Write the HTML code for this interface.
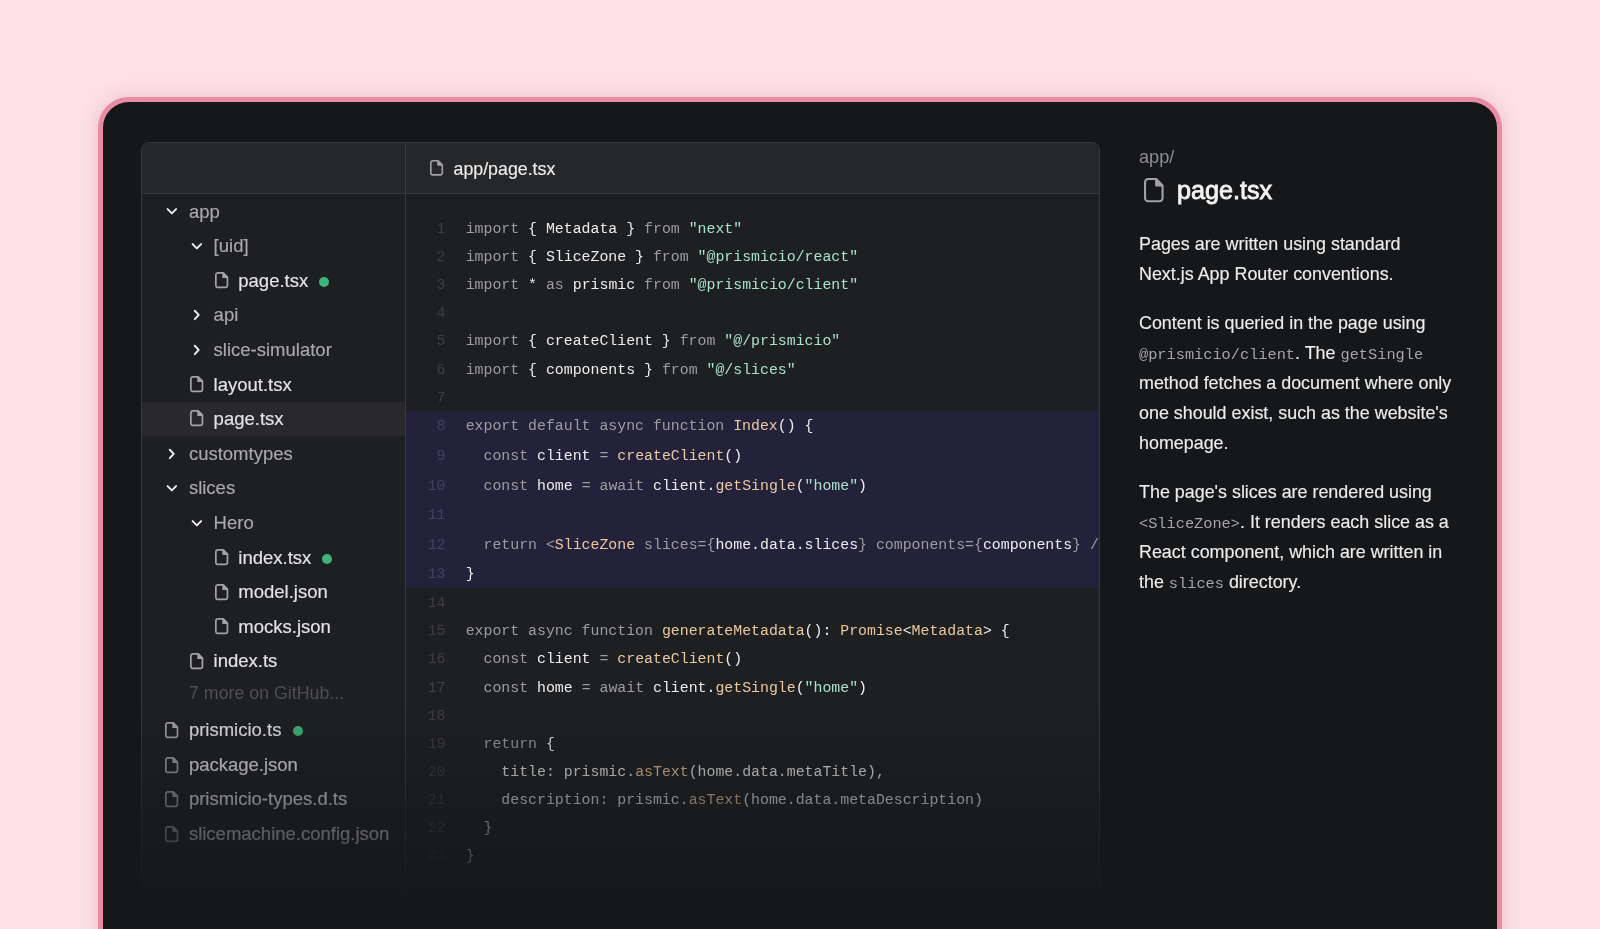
<!DOCTYPE html>
<html><head><meta charset="utf-8"><title>page.tsx</title>
<style>
*{box-sizing:border-box;margin:0;padding:0}
.root{position:absolute;left:0;top:0;width:1600px;height:929px;overflow:hidden;will-change:transform}
html,body{width:1600px;height:929px;overflow:hidden;background:#fde1e5;font-family:"Liberation Sans",sans-serif}
.frame{position:absolute;left:98px;top:97px;width:1404px;height:1000px;border:5px solid #e88ca2;border-radius:31px;background:#161719;box-shadow:0 0 18px rgba(190,100,125,0.28)}
.panel{position:absolute;left:141px;top:142px;width:959px;height:754px;border:1px solid #39393c;border-radius:8px;background:#1e1f21;overflow:hidden}
.hdr{position:absolute;left:0;top:0;width:100%;height:51px;background:#262729;border-bottom:1px solid #39393c}
.vsep{position:absolute;left:263px;top:0;width:1px;height:100%;background:#39393c}
.row{position:absolute;left:0;width:263px;height:34.6px}
.row.sel{background:#29292c;margin-top:-0.6px}
.row .ic{position:absolute}
.row .tx{position:absolute;font-size:18.5px;-webkit-text-stroke:0.15px currentColor;white-space:pre;line-height:34.6px;top:0}
.folder .tx{color:#a9a9ab}
.file .tx{color:#e4e4e6}
.dot{position:absolute;width:10px;height:10px;border-radius:50%;background:#3fb37a}
.code{position:absolute;font-family:"Liberation Mono",monospace;font-size:14.87px;white-space:pre}
.ln{position:absolute;left:0;width:305px;}
.ln .n{position:absolute;right:0;width:40px;text-align:right;}
.kw{color:#9d9d9f}.id{color:#ededed}.str{color:#a6e3cb}.fn{color:#eac9a0}
.fade{position:absolute;left:140px;width:962px;top:705px;height:193px;background:linear-gradient(to bottom,rgba(22,23,25,0) 0%,rgba(22,23,25,0.55) 55%,rgba(22,23,25,0.97) 100%)}
.right{position:absolute;left:1139px;top:0;width:330px;color:#ececec}
.rl{position:absolute;left:0;white-space:pre;font-size:17.9px;line-height:30px;-webkit-text-stroke:0.15px currentColor}
.right code{font-family:"Liberation Mono",monospace;font-size:15.3px;color:#a5a5a7;-webkit-text-stroke:0}
</style></head><body><div class="root">
<div class="frame"></div>

<div class="panel">
<div class="hdr"></div>
<div style="position:absolute;left:287.90px;top:17.10px"><svg width="14.1" height="16.7" viewBox="0 0 14.1 16.7" style="display:block;overflow:visible"><path d="M2.87 0.80 H8.16 L12.30 4.82 V12.83 A2.07 2.07 0 0 1 10.23 14.90 H2.87 A2.07 2.07 0 0 1 0.80 12.83 V2.87 A2.07 2.07 0 0 1 2.87 0.80 Z" fill="none" stroke="#a3a3a5" stroke-width="1.6" stroke-linejoin="round"/><path d="M7.76 0.80 V5.22 H12.30 Z" fill="#a3a3a5" stroke="#a3a3a5" stroke-width="0.96" stroke-linejoin="round"/></svg></div>
<div style="position:absolute;left:311.5px;top:12px;font-size:17.8px;line-height:28px;color:#ececec;white-space:pre;-webkit-text-stroke:0.15px currentColor">app/page.tsx</div>
<div class="row folder" style="top:51.60px"><div class="ic" style="left:23.00px;top:10.60px"><svg width="14" height="14" viewBox="0 0 14 14" style="display:block"><path d="M2.6 4.1 L6.85 8.4 L11.1 4.1" fill="none" stroke="#ececec" stroke-width="2" stroke-linecap="round" stroke-linejoin="round"/></svg></div><div class="tx" style="left:46.9px">app</div></div>
<div class="row folder" style="top:86.20px"><div class="ic" style="left:47.70px;top:10.60px"><svg width="14" height="14" viewBox="0 0 14 14" style="display:block"><path d="M2.6 4.1 L6.85 8.4 L11.1 4.1" fill="none" stroke="#ececec" stroke-width="2" stroke-linecap="round" stroke-linejoin="round"/></svg></div><div class="tx" style="left:71.6px">[uid]</div></div>
<div class="row file" style="top:120.80px"><div class="ic" style="left:72.55px;top:8.40px"><svg width="14.3" height="17.3" viewBox="0 0 14.3 17.3" style="display:block;overflow:visible"><path d="M2.95 0.85 H8.27 L12.45 5.01 V13.35 A2.10 2.10 0 0 1 10.35 15.45 H2.95 A2.10 2.10 0 0 1 0.85 13.35 V2.95 A2.10 2.10 0 0 1 2.95 0.85 Z" fill="none" stroke="#a3a3a5" stroke-width="1.7" stroke-linejoin="round"/><path d="M7.87 0.85 V5.41 H12.45 Z" fill="#a3a3a5" stroke="#a3a3a5" stroke-width="1.02" stroke-linejoin="round"/></svg></div><div class="tx" style="left:96.3px">page.tsx</div><span class="dot" style="left:176.9px;top:13.1px"></span></div>
<div class="row folder" style="top:155.40px"><div class="ic" style="left:47.70px;top:10.10px"><svg width="14" height="14" viewBox="0 0 14 14" style="display:block"><path d="M4.8 2.8 L8.7 6.9 L4.8 11.1" fill="none" stroke="#ececec" stroke-width="2" stroke-linecap="round" stroke-linejoin="round"/></svg></div><div class="tx" style="left:71.6px">api</div></div>
<div class="row folder" style="top:190.00px"><div class="ic" style="left:47.70px;top:10.10px"><svg width="14" height="14" viewBox="0 0 14 14" style="display:block"><path d="M4.8 2.8 L8.7 6.9 L4.8 11.1" fill="none" stroke="#ececec" stroke-width="2" stroke-linecap="round" stroke-linejoin="round"/></svg></div><div class="tx" style="left:71.6px">slice-simulator</div></div>
<div class="row file" style="top:224.60px"><div class="ic" style="left:47.85px;top:8.40px"><svg width="14.3" height="17.3" viewBox="0 0 14.3 17.3" style="display:block;overflow:visible"><path d="M2.95 0.85 H8.27 L12.45 5.01 V13.35 A2.10 2.10 0 0 1 10.35 15.45 H2.95 A2.10 2.10 0 0 1 0.85 13.35 V2.95 A2.10 2.10 0 0 1 2.95 0.85 Z" fill="none" stroke="#a3a3a5" stroke-width="1.7" stroke-linejoin="round"/><path d="M7.87 0.85 V5.41 H12.45 Z" fill="#a3a3a5" stroke="#a3a3a5" stroke-width="1.02" stroke-linejoin="round"/></svg></div><div class="tx" style="left:71.6px">layout.tsx</div></div>
<div class="row file sel" style="top:259.20px"><div class="ic" style="left:47.85px;top:8.40px"><svg width="14.3" height="17.3" viewBox="0 0 14.3 17.3" style="display:block;overflow:visible"><path d="M2.95 0.85 H8.27 L12.45 5.01 V13.35 A2.10 2.10 0 0 1 10.35 15.45 H2.95 A2.10 2.10 0 0 1 0.85 13.35 V2.95 A2.10 2.10 0 0 1 2.95 0.85 Z" fill="none" stroke="#a3a3a5" stroke-width="1.7" stroke-linejoin="round"/><path d="M7.87 0.85 V5.41 H12.45 Z" fill="#a3a3a5" stroke="#a3a3a5" stroke-width="1.02" stroke-linejoin="round"/></svg></div><div class="tx" style="left:71.6px">page.tsx</div></div>
<div class="row folder" style="top:293.80px"><div class="ic" style="left:23.00px;top:10.10px"><svg width="14" height="14" viewBox="0 0 14 14" style="display:block"><path d="M4.8 2.8 L8.7 6.9 L4.8 11.1" fill="none" stroke="#ececec" stroke-width="2" stroke-linecap="round" stroke-linejoin="round"/></svg></div><div class="tx" style="left:46.9px">customtypes</div></div>
<div class="row folder" style="top:328.40px"><div class="ic" style="left:23.00px;top:10.60px"><svg width="14" height="14" viewBox="0 0 14 14" style="display:block"><path d="M2.6 4.1 L6.85 8.4 L11.1 4.1" fill="none" stroke="#ececec" stroke-width="2" stroke-linecap="round" stroke-linejoin="round"/></svg></div><div class="tx" style="left:46.9px">slices</div></div>
<div class="row folder" style="top:363.00px"><div class="ic" style="left:47.70px;top:10.60px"><svg width="14" height="14" viewBox="0 0 14 14" style="display:block"><path d="M2.6 4.1 L6.85 8.4 L11.1 4.1" fill="none" stroke="#ececec" stroke-width="2" stroke-linecap="round" stroke-linejoin="round"/></svg></div><div class="tx" style="left:71.6px">Hero</div></div>
<div class="row file" style="top:397.60px"><div class="ic" style="left:72.55px;top:8.40px"><svg width="14.3" height="17.3" viewBox="0 0 14.3 17.3" style="display:block;overflow:visible"><path d="M2.95 0.85 H8.27 L12.45 5.01 V13.35 A2.10 2.10 0 0 1 10.35 15.45 H2.95 A2.10 2.10 0 0 1 0.85 13.35 V2.95 A2.10 2.10 0 0 1 2.95 0.85 Z" fill="none" stroke="#a3a3a5" stroke-width="1.7" stroke-linejoin="round"/><path d="M7.87 0.85 V5.41 H12.45 Z" fill="#a3a3a5" stroke="#a3a3a5" stroke-width="1.02" stroke-linejoin="round"/></svg></div><div class="tx" style="left:96.3px">index.tsx</div><span class="dot" style="left:179.5px;top:13.1px"></span></div>
<div class="row file" style="top:432.20px"><div class="ic" style="left:72.55px;top:8.40px"><svg width="14.3" height="17.3" viewBox="0 0 14.3 17.3" style="display:block;overflow:visible"><path d="M2.95 0.85 H8.27 L12.45 5.01 V13.35 A2.10 2.10 0 0 1 10.35 15.45 H2.95 A2.10 2.10 0 0 1 0.85 13.35 V2.95 A2.10 2.10 0 0 1 2.95 0.85 Z" fill="none" stroke="#a3a3a5" stroke-width="1.7" stroke-linejoin="round"/><path d="M7.87 0.85 V5.41 H12.45 Z" fill="#a3a3a5" stroke="#a3a3a5" stroke-width="1.02" stroke-linejoin="round"/></svg></div><div class="tx" style="left:96.3px">model.json</div></div>
<div class="row file" style="top:466.80px"><div class="ic" style="left:72.55px;top:8.40px"><svg width="14.3" height="17.3" viewBox="0 0 14.3 17.3" style="display:block;overflow:visible"><path d="M2.95 0.85 H8.27 L12.45 5.01 V13.35 A2.10 2.10 0 0 1 10.35 15.45 H2.95 A2.10 2.10 0 0 1 0.85 13.35 V2.95 A2.10 2.10 0 0 1 2.95 0.85 Z" fill="none" stroke="#a3a3a5" stroke-width="1.7" stroke-linejoin="round"/><path d="M7.87 0.85 V5.41 H12.45 Z" fill="#a3a3a5" stroke="#a3a3a5" stroke-width="1.02" stroke-linejoin="round"/></svg></div><div class="tx" style="left:96.3px">mocks.json</div></div>
<div class="row file" style="top:501.40px"><div class="ic" style="left:47.85px;top:8.40px"><svg width="14.3" height="17.3" viewBox="0 0 14.3 17.3" style="display:block;overflow:visible"><path d="M2.95 0.85 H8.27 L12.45 5.01 V13.35 A2.10 2.10 0 0 1 10.35 15.45 H2.95 A2.10 2.10 0 0 1 0.85 13.35 V2.95 A2.10 2.10 0 0 1 2.95 0.85 Z" fill="none" stroke="#a3a3a5" stroke-width="1.7" stroke-linejoin="round"/><path d="M7.87 0.85 V5.41 H12.45 Z" fill="#a3a3a5" stroke="#a3a3a5" stroke-width="1.02" stroke-linejoin="round"/></svg></div><div class="tx" style="left:71.6px">index.ts</div></div>
<div style="position:absolute;left:47px;top:533.2px;font-size:17.8px;line-height:34.6px;color:#4f4f51;white-space:pre">7 more on GitHub...</div>
<div class="row file" style="top:570.20px"><div class="ic" style="left:23.15px;top:9.00px"><svg width="14.3" height="17.3" viewBox="0 0 14.3 17.3" style="display:block;overflow:visible"><path d="M2.95 0.85 H8.27 L12.45 5.01 V13.35 A2.10 2.10 0 0 1 10.35 15.45 H2.95 A2.10 2.10 0 0 1 0.85 13.35 V2.95 A2.10 2.10 0 0 1 2.95 0.85 Z" fill="none" stroke="#a3a3a5" stroke-width="1.7" stroke-linejoin="round"/><path d="M7.87 0.85 V5.41 H12.45 Z" fill="#a3a3a5" stroke="#a3a3a5" stroke-width="1.02" stroke-linejoin="round"/></svg></div><div class="tx" style="left:46.9px">prismicio.ts</div><span class="dot" style="left:150.8px;top:13.1px"></span></div>
<div class="row file" style="top:604.80px"><div class="ic" style="left:23.15px;top:9.00px"><svg width="14.3" height="17.3" viewBox="0 0 14.3 17.3" style="display:block;overflow:visible"><path d="M2.95 0.85 H8.27 L12.45 5.01 V13.35 A2.10 2.10 0 0 1 10.35 15.45 H2.95 A2.10 2.10 0 0 1 0.85 13.35 V2.95 A2.10 2.10 0 0 1 2.95 0.85 Z" fill="none" stroke="#a3a3a5" stroke-width="1.7" stroke-linejoin="round"/><path d="M7.87 0.85 V5.41 H12.45 Z" fill="#a3a3a5" stroke="#a3a3a5" stroke-width="1.02" stroke-linejoin="round"/></svg></div><div class="tx" style="left:46.9px">package.json</div></div>
<div class="row file" style="top:639.40px"><div class="ic" style="left:23.15px;top:9.00px"><svg width="14.3" height="17.3" viewBox="0 0 14.3 17.3" style="display:block;overflow:visible"><path d="M2.95 0.85 H8.27 L12.45 5.01 V13.35 A2.10 2.10 0 0 1 10.35 15.45 H2.95 A2.10 2.10 0 0 1 0.85 13.35 V2.95 A2.10 2.10 0 0 1 2.95 0.85 Z" fill="none" stroke="#a3a3a5" stroke-width="1.7" stroke-linejoin="round"/><path d="M7.87 0.85 V5.41 H12.45 Z" fill="#a3a3a5" stroke="#a3a3a5" stroke-width="1.02" stroke-linejoin="round"/></svg></div><div class="tx" style="left:46.9px">prismicio-types.d.ts</div></div>
<div class="row file" style="top:674.00px"><div class="ic" style="left:23.15px;top:9.00px"><svg width="14.3" height="17.3" viewBox="0 0 14.3 17.3" style="display:block;overflow:visible"><path d="M2.95 0.85 H8.27 L12.45 5.01 V13.35 A2.10 2.10 0 0 1 10.35 15.45 H2.95 A2.10 2.10 0 0 1 0.85 13.35 V2.95 A2.10 2.10 0 0 1 2.95 0.85 Z" fill="none" stroke="#a3a3a5" stroke-width="1.7" stroke-linejoin="round"/><path d="M7.87 0.85 V5.41 H12.45 Z" fill="#a3a3a5" stroke="#a3a3a5" stroke-width="1.02" stroke-linejoin="round"/></svg></div><div class="tx" style="left:46.9px">slicemachine.config.json</div></div>
<div class="vsep"></div>
<div style="position:absolute;left:264px;top:267.8px;width:700px;height:177.1px;background:#24223a"></div>
<div class="code" style="left:263.5px;top:72.00px;width:40px;text-align:right;line-height:28px;color:#3e3e40">1</div>
<div class="code" style="left:323.7px;top:72.00px;line-height:28px"><span class="kw">import </span><span class="id">{ Metadata } </span><span class="kw">from </span><span class="str">"next"</span></div>
<div class="code" style="left:263.5px;top:100.10px;width:40px;text-align:right;line-height:28px;color:#3e3e40">2</div>
<div class="code" style="left:323.7px;top:100.10px;line-height:28px"><span class="kw">import </span><span class="id">{ SliceZone } </span><span class="kw">from </span><span class="str">"@prismicio/react"</span></div>
<div class="code" style="left:263.5px;top:128.20px;width:40px;text-align:right;line-height:28px;color:#3e3e40">3</div>
<div class="code" style="left:323.7px;top:128.20px;line-height:28px"><span class="kw">import </span><span class="id">* </span><span class="kw">as </span><span class="id">prismic </span><span class="kw">from </span><span class="str">"@prismicio/client"</span></div>
<div class="code" style="left:263.5px;top:156.30px;width:40px;text-align:right;line-height:28px;color:#3e3e40">4</div>
<div class="code" style="left:323.7px;top:156.30px;line-height:28px"></div>
<div class="code" style="left:263.5px;top:184.40px;width:40px;text-align:right;line-height:28px;color:#3e3e40">5</div>
<div class="code" style="left:323.7px;top:184.40px;line-height:28px"><span class="kw">import </span><span class="id">{ createClient } </span><span class="kw">from </span><span class="str">"@/prismicio"</span></div>
<div class="code" style="left:263.5px;top:212.50px;width:40px;text-align:right;line-height:28px;color:#3e3e40">6</div>
<div class="code" style="left:323.7px;top:212.50px;line-height:28px"><span class="kw">import </span><span class="id">{ components } </span><span class="kw">from </span><span class="str">"@/slices"</span></div>
<div class="code" style="left:263.5px;top:240.60px;width:40px;text-align:right;line-height:28px;color:#3e3e40">7</div>
<div class="code" style="left:323.7px;top:240.60px;line-height:28px"></div>
<div class="code" style="left:263.5px;top:269.40px;width:40px;text-align:right;line-height:28px;color:#433f64">8</div>
<div class="code" style="left:323.7px;top:269.40px;line-height:28px"><span class="kw">export default async function </span><span class="fn">Index</span><span class="id">() {</span></div>
<div class="code" style="left:263.5px;top:299.00px;width:40px;text-align:right;line-height:28px;color:#433f64">9</div>
<div class="code" style="left:323.7px;top:299.00px;line-height:28px"><span class="kw">  const </span><span class="id">client </span><span class="kw">= </span><span class="fn">createClient</span><span class="id">()</span></div>
<div class="code" style="left:263.5px;top:328.60px;width:40px;text-align:right;line-height:28px;color:#433f64">10</div>
<div class="code" style="left:323.7px;top:328.60px;line-height:28px"><span class="kw">  const </span><span class="id">home </span><span class="kw">= await </span><span class="id">client.</span><span class="fn">getSingle</span><span class="id">(</span><span class="str">"home"</span><span class="id">)</span></div>
<div class="code" style="left:263.5px;top:358.20px;width:40px;text-align:right;line-height:28px;color:#433f64">11</div>
<div class="code" style="left:323.7px;top:358.20px;line-height:28px"></div>
<div class="code" style="left:263.5px;top:387.80px;width:40px;text-align:right;line-height:28px;color:#433f64">12</div>
<div class="code" style="left:323.7px;top:387.80px;line-height:28px"><span class="kw">  return &lt;</span><span class="fn">SliceZone</span><span class="kw"> slices={</span><span class="id">home.data.slices</span><span class="kw">} components={</span><span class="id">components</span><span class="kw">} /&gt;</span></div>
<div class="code" style="left:263.5px;top:417.40px;width:40px;text-align:right;line-height:28px;color:#433f64">13</div>
<div class="code" style="left:323.7px;top:417.40px;line-height:28px"><span class="id">}</span></div>
<div class="code" style="left:263.5px;top:446.25px;width:40px;text-align:right;line-height:28px;color:#3e3e40">14</div>
<div class="code" style="left:323.7px;top:446.25px;line-height:28px"></div>
<div class="code" style="left:263.5px;top:474.35px;width:40px;text-align:right;line-height:28px;color:#3e3e40">15</div>
<div class="code" style="left:323.7px;top:474.35px;line-height:28px"><span class="kw">export async function </span><span class="fn">generateMetadata</span><span class="id">(): </span><span class="fn">Promise</span><span class="id">&lt;</span><span class="fn">Metadata</span><span class="id">&gt; {</span></div>
<div class="code" style="left:263.5px;top:502.45px;width:40px;text-align:right;line-height:28px;color:#3e3e40">16</div>
<div class="code" style="left:323.7px;top:502.45px;line-height:28px"><span class="kw">  const </span><span class="id">client </span><span class="kw">= </span><span class="fn">createClient</span><span class="id">()</span></div>
<div class="code" style="left:263.5px;top:530.55px;width:40px;text-align:right;line-height:28px;color:#3e3e40">17</div>
<div class="code" style="left:323.7px;top:530.55px;line-height:28px"><span class="kw">  const </span><span class="id">home </span><span class="kw">= await </span><span class="id">client.</span><span class="fn">getSingle</span><span class="id">(</span><span class="str">"home"</span><span class="id">)</span></div>
<div class="code" style="left:263.5px;top:558.65px;width:40px;text-align:right;line-height:28px;color:#3e3e40">18</div>
<div class="code" style="left:323.7px;top:558.65px;line-height:28px"></div>
<div class="code" style="left:263.5px;top:586.75px;width:40px;text-align:right;line-height:28px;color:#3e3e40">19</div>
<div class="code" style="left:323.7px;top:586.75px;line-height:28px"><span class="kw">  return </span><span class="id">{</span></div>
<div class="code" style="left:263.5px;top:614.85px;width:40px;text-align:right;line-height:28px;color:#3e3e40">20</div>
<div class="code" style="left:323.7px;top:614.85px;line-height:28px"><span class="id">    title: prismic.</span><span class="fn">asText</span><span class="id">(home.data.metaTitle),</span></div>
<div class="code" style="left:263.5px;top:642.95px;width:40px;text-align:right;line-height:28px;color:#3e3e40">21</div>
<div class="code" style="left:323.7px;top:642.95px;line-height:28px"><span class="id">    description: prismic.</span><span class="fn">asText</span><span class="id">(home.data.metaDescription)</span></div>
<div class="code" style="left:263.5px;top:671.05px;width:40px;text-align:right;line-height:28px;color:#3e3e40">22</div>
<div class="code" style="left:323.7px;top:671.05px;line-height:28px"><span class="id">  }</span></div>
<div class="code" style="left:263.5px;top:699.15px;width:40px;text-align:right;line-height:28px;color:#3e3e40">23</div>
<div class="code" style="left:323.7px;top:699.15px;line-height:28px"><span class="id">}</span></div>
</div>
<div class="fade"></div>
<div class="right">
<div style="position:absolute;left:0;top:145px;font-size:18.2px;line-height:24px;color:#8e8e90;white-space:pre">app/</div>
<div style="position:absolute;left:5.40px;top:178px"><svg width="20.6" height="25.3" viewBox="0 0 20.6 25.3" style="display:block;overflow:visible"><path d="M4.14 1.05 H12.25 L18.55 7.38 V20.16 A3.09 3.09 0 0 1 15.46 23.25 H4.14 A3.09 3.09 0 0 1 1.05 20.16 V4.14 A3.09 3.09 0 0 1 4.14 1.05 Z" fill="none" stroke="#a3a3a5" stroke-width="2.1" stroke-linejoin="round"/><path d="M11.85 1.05 V7.78 H18.55 Z" fill="#a3a3a5" stroke="#a3a3a5" stroke-width="1.26" stroke-linejoin="round"/></svg></div>
<div style="position:absolute;left:38px;top:175px;font-size:25.2px;line-height:30px;color:#f2f2f2;white-space:pre;-webkit-text-stroke:0.85px currentColor">page.tsx</div>
<div class="rl" style="top:229.20px">Pages are written using standard</div>
<div class="rl" style="top:259.15px">Next.js App Router conventions.</div>
<div class="rl" style="top:308.40px">Content is queried in the page using</div>
<div class="rl" style="top:338.35px"><code>@prismicio/client</code>. The <code>getSingle</code></div>
<div class="rl" style="top:368.30px">method fetches a document where only</div>
<div class="rl" style="top:398.25px">one should exist, such as the website's</div>
<div class="rl" style="top:428.20px">homepage.</div>
<div class="rl" style="top:477.45px">The page's slices are rendered using</div>
<div class="rl" style="top:507.40px"><code>&lt;SliceZone&gt;</code>. It renders each slice as a</div>
<div class="rl" style="top:537.35px">React component, which are written in</div>
<div class="rl" style="top:567.30px">the <code>slices</code> directory.</div>
</div>
</div></body></html>
